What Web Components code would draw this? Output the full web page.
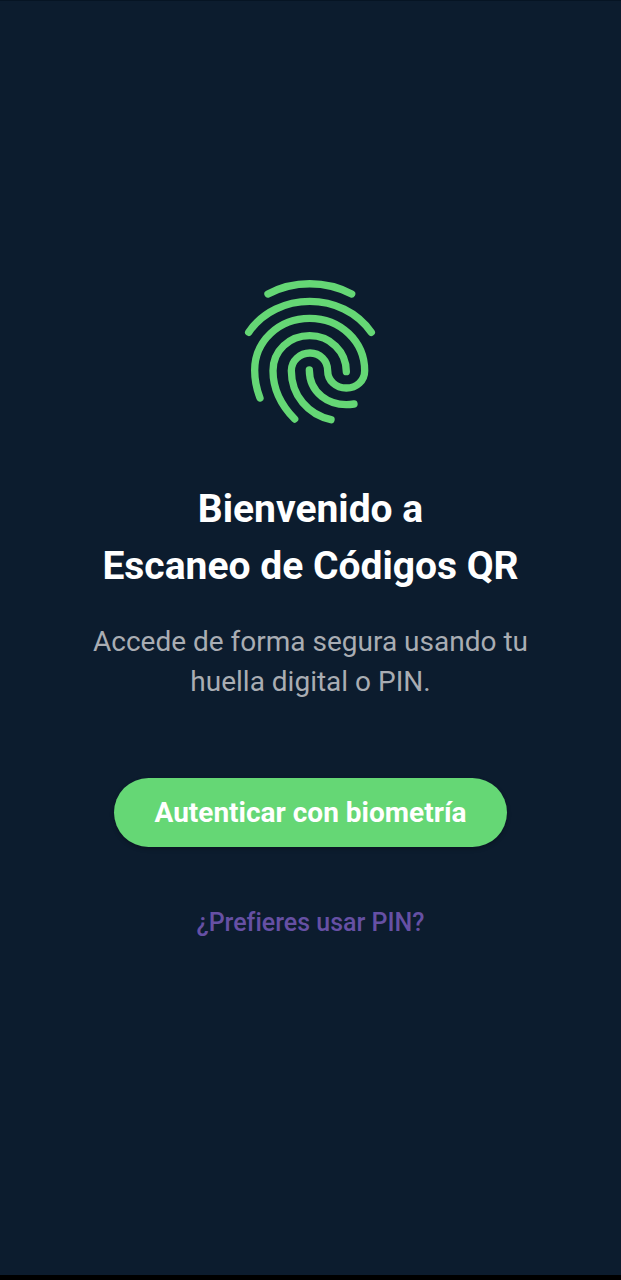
<!DOCTYPE html>
<html lang="es">
<head>
<meta charset="utf-8">
<meta name="viewport" content="width=device-width, initial-scale=1">
<title>Escaneo de Códigos QR</title>
<style>
  body { margin: 0; background: #0c1c2e; font-family: Roboto, "Liberation Sans", sans-serif; font-variant-ligatures: none; }
</style>
</head>
<body>
<welcome-screen>
  <fingerprint-icon slot="icon"></fingerprint-icon>
  <welcome-title slot="title">Bienvenido a<br>Escaneo de Códigos QR</welcome-title>
  <welcome-text slot="text">Accede de forma segura usando tu huella digital o PIN.</welcome-text>
  <primary-button slot="action">Autenticar con biometría</primary-button>
  <text-link slot="alternative" href="#pin">¿Prefieres usar PIN?</text-link>
</welcome-screen>
<script>
  const define = (name, markup) => {
    const template = document.createElement('template');
    template.innerHTML = markup;
    customElements.define(name, class extends HTMLElement {
      constructor() {
        super();
        this.attachShadow({ mode: 'open' }).append(template.content.cloneNode(true));
      }
      connectedCallback() {
        const link = this.shadowRoot.querySelector('a');
        if (link) link.href = this.getAttribute('href') || '#';
      }
    });
  };

  define('fingerprint-icon', `
    <style>
      :host { display: block; width: 160px; height: 165px; }
      svg { display: block; width: 100%; height: 100%; }
    </style>
    <svg viewBox="3 3 480 495" fill="none" stroke="#65d775" stroke-width="22" stroke-linecap="round" stroke-linejoin="round" aria-hidden="true">
      <path d="M114 75C190 34 288 34 365 75"/>
      <path d="M56 190C140 66 338 66 424 190"/>
      <path d="M90 387C78 356 74 331 74 304C74 216 147 148 239 148C331 148 404 217 404 305C404 335 380 357 349 357C318 357 293 335 293 305C293 275 270 252 240 252C210 252 184 275 184 305C184 380 235 437 303 452"/>
      <path d="M194 450C150 405 129 360 129 305C129 245 178 200 239 200C300 200 349 247 349 308"/>
      <path d="M238 303C238 367 292 416 372 405"/>
    </svg>`);

  define('welcome-title', `
    <style>
      :host { display: block; }
      h1 { margin: 0; font-size: 39px; line-height: 57px; font-weight: 700; color: #fff; text-align: center; }
    </style>
    <h1><slot></slot></h1>`);

  define('welcome-text', `
    <style>
      :host { display: block; }
      p { margin: 0; font-size: 28px; line-height: 40px; color: #a9adb3; text-align: center; }
    </style>
    <p><slot></slot></p>`);

  define('primary-button', `
    <style>
      :host { display: block; }
      button { display: block; border: 0; margin: 0; padding: 0 40px; height: 69px; border-radius: 35px; background: #65d775; color: #fff; font: 700 28px/68px Roboto, "Liberation Sans", sans-serif; box-shadow: 0 2px 4px rgba(0, 0, 0, .25); cursor: pointer; }
    </style>
    <button type="button"><slot></slot></button>`);

  define('text-link', `
    <style>
      :host { display: block; }
      a { display: block; padding: 16px; font-size: 25px; line-height: 28px; font-weight: 500; color: #6650a4; text-decoration: none; }
    </style>
    <a><slot></slot></a>`);

  define('welcome-screen', `
    <style>
      :host { display: flex; flex-direction: column; min-height: 100vh; box-sizing: border-box; border-top: 1px solid #061423; }
      main { flex: 1; display: flex; flex-direction: column; align-items: center; justify-content: center; padding: 0 80px 53px; }
      .title { margin-top: 46px; }
      .text { margin-top: 27px; }
      .action { margin-top: 76px; }
      .alternative { margin-top: 46px; }
      .bar { height: 5px; background: #000; }
    </style>
    <main>
      <slot name="icon"></slot>
      <div class="title"><slot name="title"></slot></div>
      <div class="text"><slot name="text"></slot></div>
      <div class="action"><slot name="action"></slot></div>
      <div class="alternative"><slot name="alternative"></slot></div>
    </main>
    <div class="bar"></div>`);
</script>
</body>
</html>
